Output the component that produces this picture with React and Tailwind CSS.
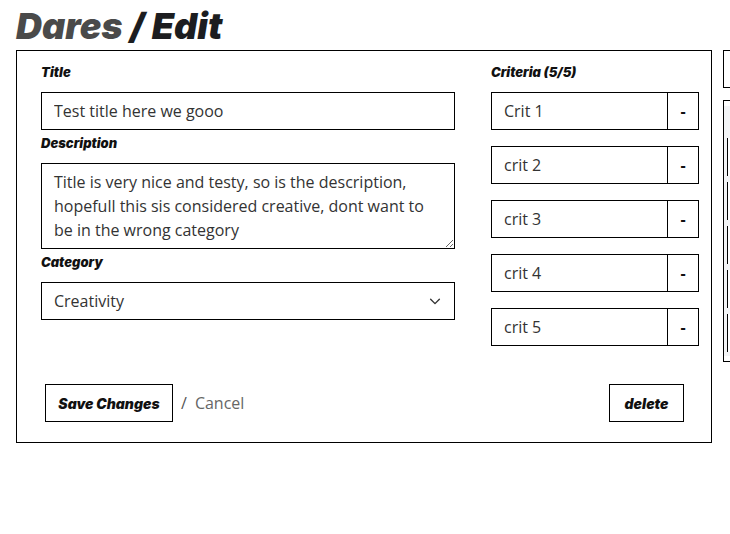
import React from 'react';

const crits = ['Crit 1', 'crit 2', 'crit 3', 'crit 4', 'crit 5'];

const Label = ({ children }) => (
    <div className="mt-[3px] mb-2.5 h-5 text-[13px] leading-5 font-black italic text-[#111]" style={{ fontFamily: 'Inter, sans-serif' }}>
        {children}
    </div>
);

const App = () => {
    return (
        <div className="w-[730px] h-[534px] overflow-hidden bg-white" style={{ fontFamily: '"Open Sans", sans-serif' }}>
            <h1 className="pl-4 h-[50px] text-[36px] leading-[52px] font-black italic" style={{ fontFamily: 'Inter, sans-serif' }}>
                <span className="text-[#4a4a4a]">Dares</span> <span className="text-[#1c1d20]">/ Edit</span>
            </h1>
            <div className="flex items-start gap-[11px] pl-4">
                <div className="w-[696px] shrink-0 border border-black pl-6 pr-3 pt-2 pb-5">
                    <div className="flex justify-between">
                        <div className="w-[414px]">
                            <Label>Title</Label>
                            <input
                                className="block w-full h-[38px] border border-black px-3 text-base text-[#333] outline-none"
                                defaultValue="Test title here we gooo"
                            />
                            <Label>Description</Label>
                            <textarea
                                className="block w-full h-[86px] border border-black px-3 py-1.5 text-base leading-6 text-[#333] outline-none"
                                defaultValue="Title is very nice and testy, so is the description, hopefull this sis considered creative, dont want to be in the wrong category"
                            />
                            <Label>Category</Label>
                            <div className="flex items-center justify-between h-[38px] border border-black pl-3 pr-3 text-base text-[#333]">
                                <span>Creativity</span>
                                <svg width="14" height="14" viewBox="0 0 16 16" fill="none" stroke="#333" strokeWidth="1.6" strokeLinecap="round" strokeLinejoin="round">
                                    <path d="M3 6l5 5 5-5" />
                                </svg>
                            </div>
                        </div>
                        <div className="w-[208px]">
                            <Label>Criteria (5/5)</Label>
                            <div className="flex flex-col gap-4">
                                {crits.map((c) => (
                                    <div key={c} className="flex h-[38px] border border-black">
                                        <div className="flex-1 flex items-center px-3 text-base text-[#333]">{c}</div>
                                        <div className="w-[31px] border-l border-black flex items-center justify-center text-base font-bold text-[#111]">-</div>
                                    </div>
                                ))}
                            </div>
                        </div>
                    </div>
                    <div className="mt-[38px] flex items-center justify-between ml-1 mr-[15px]">
                        <div className="flex items-center">
                            <button className="h-[38px] w-[128px] border border-black text-[14px] font-black italic text-[#111]" style={{ fontFamily: 'Inter, sans-serif' }}>
                                Save Changes
                            </button>
                            <span className="ml-2 text-base text-[#555]">/</span>
                            <span className="ml-2 text-base text-[#666]">Cancel</span>
                        </div>
                        <button className="h-[38px] w-[75px] border border-black text-[14px] font-black italic text-[#111]" style={{ fontFamily: 'Inter, sans-serif' }}>
                            delete
                        </button>
                    </div>
                </div>
                <div className="flex flex-col gap-3 shrink-0 w-[40px]">
                    <div className="h-[38px] border border-black" />
                    <div className="h-[262px] border border-black pt-[5px]">
                        <div className="bg-gray-100 h-[250px] pt-8 flex flex-col gap-1.5">
                            {[0, 1, 2, 3, 4].map((i) => (
                                <div key={i} className="h-[38px] ml-[3px] border-l border-black bg-white" />
                            ))}
                        </div>
                    </div>
                </div>
            </div>
        </div>
    );
};

export default App;
